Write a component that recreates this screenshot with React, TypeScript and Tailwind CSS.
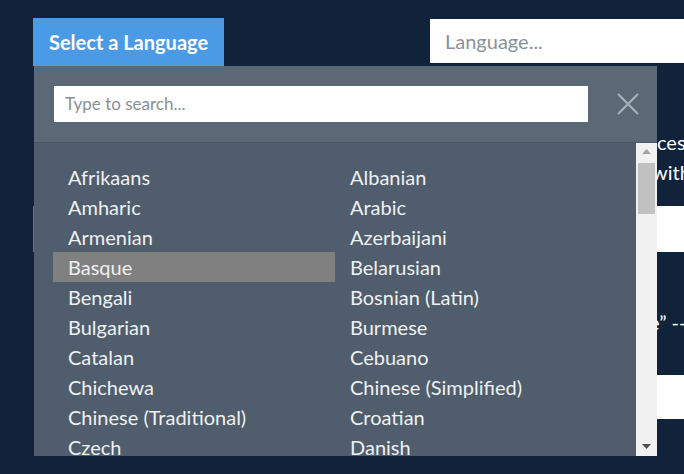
import React from "react";

const rows: [string, string][] = [
  ["Afrikaans", "Albanian"],
  ["Amharic", "Arabic"],
  ["Armenian", "Azerbaijani"],
  ["Basque", "Belarusian"],
  ["Bengali", "Bosnian (Latin)"],
  ["Bulgarian", "Burmese"],
  ["Catalan", "Cebuano"],
  ["Chichewa", "Chinese (Simplified)"],
  ["Chinese (Traditional)", "Croatian"],
  ["Czech", "Danish"],
  ["Dutch", "English"],
];

export default function App() {
  return (
    <div className="relative h-[474px] w-[684px] overflow-hidden bg-[#10233a] font-['Lato',sans-serif]">
      {/* underlying page */}
      <div className="pt-[18px] pl-[33px]">
        <div className="flex items-start">
          <div className="flex h-[48px] w-[191px] shrink-0 items-center bg-[#4a9ae6] pl-[16px] text-[20px] font-bold text-white">
            Select a Language
          </div>
          <div className="ml-[206px] mt-[1px] flex h-[44px] w-[300px] shrink-0 items-center bg-white pl-[15px] text-[20px] text-[#8b9199]">
            Language...
          </div>
        </div>
        <div className="mt-[61px] whitespace-nowrap pl-[624px] text-[20px] leading-[30px] text-white">
          ces
        </div>
        <div className="whitespace-nowrap pl-[619px] text-[20px] leading-[30px] text-white">
          with
        </div>
        <div className="mt-[19px] h-[46px] w-[700px] border-l border-[#3b7bd0] bg-white" />
        <div className="mt-[55px] whitespace-nowrap pl-[616px] text-[20px] leading-[30px] text-white">
          e” --
        </div>
        <div className="ml-[4px] mt-[38px] h-[44px] w-[700px] bg-white" />
      </div>

      {/* dropdown popup */}
      <div className="absolute left-[34px] top-[66px] z-10 flex h-[390px] w-[623px] flex-col">
        <div className="flex h-[77px] shrink-0 items-center border-b border-[#4a5663] bg-[#5b6876] pl-[20px] pr-[18px]">
          <div className="flex h-[36px] w-[534px] items-center bg-white pl-[11px] text-[17px] text-[#8a8f95]">
            Type to search...
          </div>
          <svg className="ml-auto" width="22" height="22" viewBox="0 0 22 22">
            <path d="M1 1L21 21M21 1L1 21" stroke="#aab3bd" strokeWidth="2" fill="none" />
          </svg>
        </div>
        <div className="flex min-h-0 flex-1 bg-[#4f5d6c]">
          <div className="min-w-0 flex-1 overflow-hidden pl-[19px] pt-[19px]">
            <div className="grid grid-cols-[282px_282px]">
              {rows.map(([a, b]) => (
                <React.Fragment key={a}>
                  <div
                    className={`h-[30px] pl-[15px] text-[20px] leading-[30px] text-[#eef0f2] ${
                      a === "Basque" ? "bg-[#808080]" : ""
                    }`}
                  >
                    {a}
                  </div>
                  <div className="h-[30px] pl-[15px] text-[20px] leading-[30px] text-[#eef0f2]">{b}</div>
                </React.Fragment>
              ))}
            </div>
          </div>
          <div className="flex w-[21px] shrink-0 flex-col items-center bg-[#f1f1f1]">
            <svg className="mt-[6px]" width="9" height="5" viewBox="0 0 9 5">
              <path d="M0 5L4.5 0L9 5Z" fill="#a3a3a3" />
            </svg>
            <div className="mt-[9px] h-[51px] w-[17px] bg-[#c1c1c1]" />
            <svg className="mb-[7px] mt-auto" width="9" height="5" viewBox="0 0 9 5">
              <path d="M0 0L9 0L4.5 5Z" fill="#505050" />
            </svg>
          </div>
        </div>
      </div>
    </div>
  );
}
